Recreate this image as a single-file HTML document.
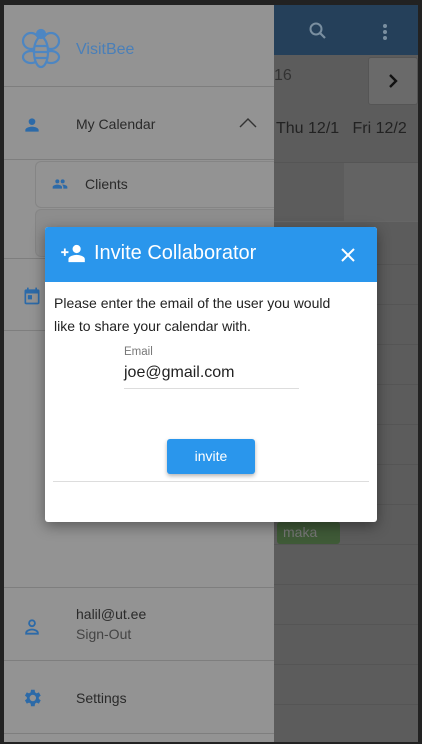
<!DOCTYPE html>
<html><head><meta charset="utf-8"><style>
*{margin:0;padding:0;box-sizing:border-box}
body{width:422px;height:744px;background:#222;position:relative;overflow:hidden;font-family:"Liberation Sans",sans-serif}
.abs{position:absolute}
.hl{position:absolute;height:1px;background:#555}
.dl{position:absolute;height:1px;background:#7e7e7e;left:4px;width:270px}
.t{position:absolute;color:#2a2a2a;font-size:14px}
</style></head><body>
<div class="abs" style="left:4px;top:5px;width:414px;height:737px;background:#5c5c5c"></div>
<div class="abs" style="left:274px;top:5px;width:144px;height:50px;background:#25405a"></div>
<svg class="abs" style="left:308px;top:21px" width="20" height="20" viewBox="0 0 20 20"><circle cx="8" cy="8" r="5.5" fill="none" stroke="#7a8fa0" stroke-width="2"/><path d="M12 12l5 5" stroke="#7a8fa0" stroke-width="2.2"/></svg>
<div class="abs" style="left:383px;top:24px;width:4px;height:4px;border-radius:2px;background:#7a8fa0;box-shadow:0 6px 0 #7a8fa0,0 12px 0 #7a8fa0"></div>
<div class="t" style="left:274px;top:67px;font-size:16px;color:#333">16</div>
<div class="abs" style="left:368px;top:57px;width:50px;height:48px;background:#6a6a6a;border-radius:3px;border:1px solid #555"></div>
<svg class="abs" style="left:387px;top:73px" width="12" height="16" viewBox="0 0 12 16"><path d="M3 2l6 6-6 6" stroke="#111" stroke-width="2.4" fill="none"/></svg>
<div class="t" style="left:276px;top:120px;font-size:16px;color:#222">Thu 12/1&nbsp;&nbsp; Fri 12/2</div>
<div class="hl" style="left:274px;top:162px;width:144px"></div>
<div class="abs" style="left:344px;top:163px;width:74px;height:58px;background:#636363"></div>
<div class="hl" style="left:274px;top:221px;width:144px;background:#666"></div>
<div class="hl" style="left:274px;top:264px;width:144px"></div>
<div class="hl" style="left:274px;top:304px;width:144px"></div>
<div class="hl" style="left:274px;top:344px;width:144px"></div>
<div class="hl" style="left:274px;top:384px;width:144px"></div>
<div class="hl" style="left:274px;top:424px;width:144px"></div>
<div class="hl" style="left:274px;top:464px;width:144px"></div>
<div class="hl" style="left:274px;top:504px;width:144px"></div>
<div class="hl" style="left:274px;top:544px;width:144px"></div>
<div class="hl" style="left:274px;top:584px;width:144px"></div>
<div class="hl" style="left:274px;top:624px;width:144px"></div>
<div class="hl" style="left:274px;top:664px;width:144px"></div>
<div class="hl" style="left:274px;top:704px;width:144px"></div>
<div class="abs" style="left:277px;top:522px;width:63px;height:22px;background:#3f5a37;border-radius:3px;color:#777;font-size:14px;padding:2px 6px">maka</div>
<div class="abs" style="left:4px;top:5px;width:270px;height:737px;background:#939393"></div>
<svg class="abs" style="left:21px;top:28px" width="40" height="42" viewBox="0 0 40 42" fill="none" stroke="#4d86c2" stroke-width="2.2"><ellipse cx="10" cy="13" rx="8" ry="8"/><ellipse cx="30" cy="13" rx="8" ry="8"/><ellipse cx="10" cy="29" rx="8" ry="6"/><ellipse cx="30" cy="29" rx="8" ry="6"/><ellipse cx="20" cy="24" rx="7" ry="15" fill="#939393"/><circle cx="20" cy="6" r="4" fill="#4d86c2"/><path d="M13 18h14M13 24h14M14 30h12"/></svg>
<div class="t" style="left:76px;top:41px;font-size:16px;color:#4a7fb8">VisitBee</div>
<div class="dl" style="top:86px"></div>
<svg class="abs" style="left:22px;top:115px" width="20" height="20" viewBox="0 0 24 24"><path fill="#2c6aa8" d="M12 12a4 4 0 1 0 0-8 4 4 0 0 0 0 8zm0 2c-2.7 0-8 1.3-8 4v2h16v-2c0-2.7-5.3-4-8-4z"/></svg>
<div class="t" style="left:76px;top:116px">My Calendar</div>
<svg class="abs" style="left:239px;top:117px" width="18" height="12" viewBox="0 0 18 12"><path d="M1 10l8-8 8 8" stroke="#333" stroke-width="1.4" fill="none"/></svg>
<div class="dl" style="top:159px"></div>
<div class="abs" style="left:35px;top:161px;width:239px;height:47px;border:1px solid #858585;border-right:none;border-radius:6px 0 0 6px;background:#939393"></div>
<svg class="abs" style="left:51px;top:176px" width="18" height="16" viewBox="0 0 24 24"><path fill="#2c6aa8" d="M16 11a3 3 0 1 0 0-6 3 3 0 0 0 0 6zm-8 0a3 3 0 1 0 0-6 3 3 0 0 0 0 6zm0 2c-2.3 0-7 1.2-7 3.5V19h14v-2.5C15 14.2 10.3 13 8 13zm8 0c-.3 0-.6 0-1 .1 1.2.8 2 1.9 2 3.4V19h6v-2.5c0-2.3-4.7-3.5-7-3.5z"/></svg>
<div class="t" style="left:85px;top:176px">Clients</div>
<div class="abs" style="left:35px;top:209px;width:239px;height:48px;border:1px solid #858585;border-right:none;border-radius:6px 0 0 6px;background:#8d8d8d"></div>
<div class="dl" style="top:258px"></div>
<svg class="abs" style="left:22px;top:285px" width="20" height="22" viewBox="0 0 24 24"><path fill="#2c6aa8" d="M19 4h-1V2h-2v2H8V2H6v2H5a2 2 0 0 0-2 2v14a2 2 0 0 0 2 2h14a2 2 0 0 0 2-2V6a2 2 0 0 0-2-2zm0 16H5V9h14v11zM7 11h5v5H7z"/></svg>
<div class="dl" style="top:330px"></div>
<div class="dl" style="top:587px"></div>
<svg class="abs" style="left:22px;top:616px" width="20" height="22" viewBox="0 0 24 24"><path fill="none" stroke="#2c6aa8" stroke-width="2.2" d="M12 11a3.5 3.5 0 1 0 0-7 3.5 3.5 0 0 0 0 7zM5 20v-1c0-2.5 4-4 7-4s7 1.5 7 4v1z"/></svg>
<div class="t" style="left:76px;top:606px">halil@ut.ee</div>
<div class="t" style="left:76px;top:626px;color:#444">Sign-Out</div>
<div class="dl" style="top:660px"></div>
<svg class="abs" style="left:21px;top:687px" width="22" height="22" viewBox="0 0 24 24"><path fill="#2c6aa8" d="M19.4 13a7.8 7.8 0 0 0 0-2l2.1-1.6-2-3.5-2.5 1a7 7 0 0 0-1.7-1L14.9 3h-4l-.4 2.9a7 7 0 0 0-1.7 1l-2.5-1-2 3.5L6.4 11a7.8 7.8 0 0 0 0 2l-2.1 1.6 2 3.5 2.5-1a7 7 0 0 0 1.7 1l.4 2.9h4l.4-2.9a7 7 0 0 0 1.7-1l2.5 1 2-3.5zM12.9 15.5a3.5 3.5 0 1 1 0-7 3.5 3.5 0 0 1 0 7z"/></svg>
<div class="t" style="left:76px;top:690px">Settings</div>
<div class="dl" style="top:733px"></div>
<div class="abs" style="left:45px;top:227px;width:332px;height:295px;background:#fff;border-radius:3px;box-shadow:0 4px 14px rgba(0,0,0,.4);overflow:hidden">
<div style="height:55px;background:#2a96ec;position:relative">
<svg class="abs" style="left:16px;top:17px" width="24" height="20" viewBox="0 0 26 22"><path fill="#fff" d="M17 10a4.5 4.5 0 1 0 0-9 4.5 4.5 0 0 0 0 9zM0 8h3V5h2v3h3v2H5v3H3v-3H0zm17 4c-3 0-9 1.5-9 4.5V20h18v-3.5c0-3-6-4.5-9-4.5z"/></svg>
<div class="abs" style="left:49px;top:15px;color:#fff;font-size:20px">Invite Collaborator</div>
<svg class="abs" style="left:295px;top:20px" width="16" height="16" viewBox="0 0 16 16"><path d="M2 2l12 12M14 2L2 14" stroke="#fff" stroke-width="2"/></svg>
</div>
<div class="abs" style="left:9px;top:65px;font-size:14px;line-height:23px;color:#222">Please enter the email of the user you would<br>like to share your calendar with.</div>
<div class="abs" style="left:79px;top:119px;font-size:11.5px;color:#777">Email</div>
<div class="abs" style="left:79px;top:137px;font-size:16px;color:#222">joe@gmail.com</div>
<div class="abs" style="left:79px;top:161px;width:175px;height:1px;background:#ddd"></div>
<div class="abs" style="left:122px;top:212px;width:88px;height:35px;background:#2a96ec;border-radius:3px;box-shadow:0 2px 4px rgba(0,0,0,.3);color:#fff;font-size:14px;text-align:center;line-height:35px">invite</div>
<div class="abs" style="left:8px;top:254px;width:316px;height:1px;background:#ddd"></div>
</div>
</body></html>
